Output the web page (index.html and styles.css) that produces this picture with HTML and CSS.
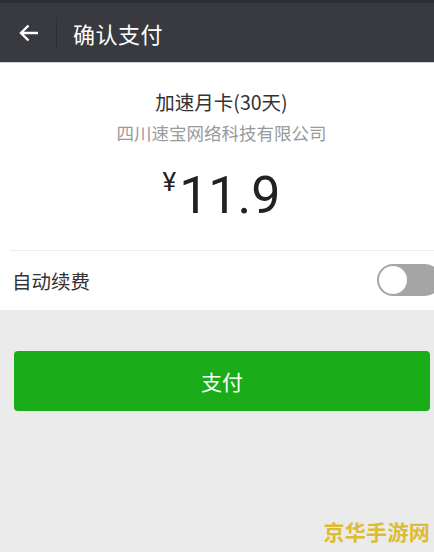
FILE: index.html
```html
<!DOCTYPE html>
<html lang="zh-CN">

<head>
    <meta charset="UTF-8">
    <meta name="viewport" content="width=device-width, initial-scale=1.0">
    <title>确认支付</title>
    <link rel="stylesheet" href="styles.css">
</head>

<body>
    <div class="topbar">
        <div class="back">
            <svg width="20" height="18" viewBox="0 0 20 18">
                <path d="M19 9H2M9.5 1.5L2 9l7.5 7.5" fill="none" stroke="#fff" stroke-width="2.4" />
            </svg>
        </div>
        <div class="sep"></div>
        <div class="title">确认支付</div>
    </div>

    <div class="order">
        <div class="product">加速月卡(30天)</div>
        <div class="seller">四川速宝网络科技有限公司</div>
        <div class="price"><span class="yen">¥</span><span class="amount">11.9</span></div>
    </div>

    <div class="renew">
        <span>自动续费</span>
        <div class="switch"><div class="knob"></div></div>
    </div>

    <div class="actions">
        <button class="pay">支付</button>
    </div>

    <div class="mark">京华手游网</div>
</body>

</html>
```

FILE: styles.css
```css
* {
    box-sizing: border-box;
}

body {
    margin: 0;
    height: 552px;
    overflow: hidden;
    background-color: #ebebeb;
    font-family: "Noto Sans CJK SC", "Noto Sans", sans-serif;
    position: relative;
}

.topbar {
    height: 63px;
    display: flex;
    align-items: center;
    background-color: #393a3f;
    border-top: 3px solid #2e2f33;
    border-bottom: 1px solid #cfcfcf;
}

.back {
    width: 56px;
    display: flex;
    justify-content: center;
    padding-left: 2px;
}

.back svg {
    display: block;
}

.sep {
    width: 1px;
    height: 30px;
    background-color: #2f3034;
}

.title {
    margin-left: 16px;
    color: #fff;
    font-size: 22px;
    letter-spacing: 0.5px;
}

.order {
    background-color: #fff;
    text-align: center;
    padding-top: 24px;
    padding-left: 9px;
    height: 187px;
}

.product {
    color: #333;
    font-size: 19.5px;
    line-height: 30px;
}

.seller {
    color: #9a9a9a;
    font-size: 17.5px;
    line-height: 26px;
    margin-top: 3px;
}

.price {
    color: #222;
    margin-top: 20px;
    display: flex;
    justify-content: center;
    align-items: flex-start;
}

.yen {
    font-family: Roboto, sans-serif;
    font-size: 26px;
    margin-top: 1px;
    margin-right: 3px;
}

.amount {
    font-family: Roboto, sans-serif;
    font-size: 52px;
    line-height: 60px;
}

.renew {
    position: relative;
    background-color: #fff;
    height: 60px;
    margin-left: 10px;
    display: flex;
    align-items: center;
    justify-content: space-between;
    border-top: 1px solid #ececec;
    color: #333;
    font-size: 19.5px;
    padding-left: 2px;
    padding-bottom: 1px;
}

.renew::before {
    content: "";
    position: absolute;
    left: -10px;
    top: -1px;
    bottom: 0;
    width: 10px;
    background-color: #fff;
}

.switch {
    width: 64px;
    height: 32px;
    margin-right: -7px;
    border-radius: 16px;
    background-color: #a5a5a5;
    padding: 2px;
}

.knob {
    width: 28px;
    height: 28px;
    border-radius: 50%;
    background-color: #fff;
}

.actions {
    padding: 41px 4px 0 14px;
}

.pay {
    display: block;
    width: 100%;
    height: 60px;
    border: none;
    border-radius: 4px;
    background-color: #1aad19;
    color: #fff;
    font-family: "Noto Sans CJK SC", sans-serif;
    font-size: 21px;
    cursor: pointer;
}

.mark {
    position: absolute;
    right: 4px;
    bottom: 6px;
    color: #dcbd32;
    font-size: 21px;
    font-weight: bold;
    letter-spacing: 0.3px;
}
```
